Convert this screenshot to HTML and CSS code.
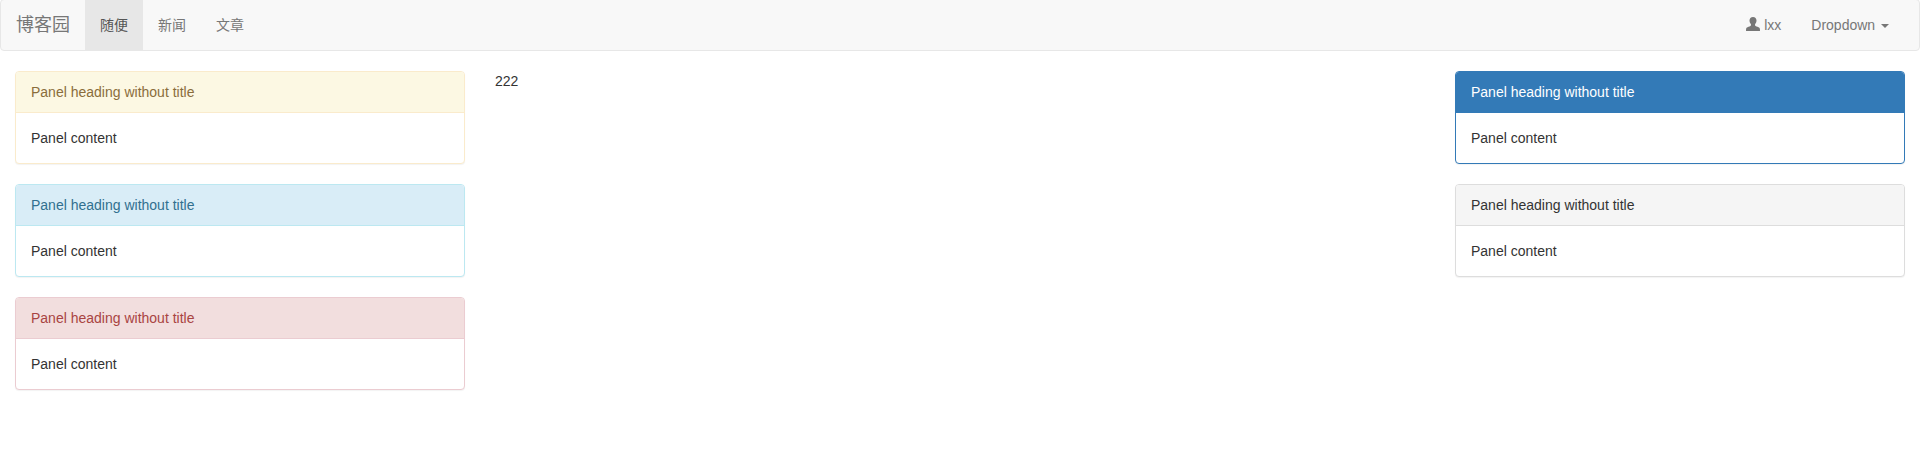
FILE: index.html
```html
<!DOCTYPE html>
<html lang="zh-CN">
<head>
    <meta charset="UTF-8">
    <meta name="viewport" content="width=device-width, initial-scale=1.0">
    <title>博客园</title>
    <link rel="stylesheet" href="styles.css">
</head>
<body>
    <nav class="navbar">
        <a href="#" class="navbar-brand">博客园</a>
        <ul class="nav">
            <li class="active"><a href="#">随便</a></li>
            <li><a href="#">新闻</a></li>
            <li><a href="#">文章</a></li>
        </ul>
        <ul class="nav nav-right">
            <li>
                <a href="#">
                    <svg class="icon-user" viewBox="0 0 14 14" aria-hidden="true"><path d="M7 0C4.800 0 3.500 1.500 3.500 3.600c0 1.500.6 2.800 1.300 3.500.3.400.3 1 .1 1.400-.3.500-1.100.8-2.400 1.200C1.100 10.200.3 10.800.1 11.800L0 14h14l-.1-2.200c-.2-1-1-1.600-2.400-2.100-1.300-.4-2.100-.7-2.400-1.200-.2-.4-.2-1 .1-1.400.7-.7 1.300-2 1.300-3.500C10.500 1.500 9.200 0 7 0z"/></svg>
                    lxx
                </a>
            </li>
            <li><a href="#">Dropdown <span class="caret"></span></a></li>
        </ul>
    </nav>

    <div class="row">
        <div class="col-side">
            <div class="panel panel-warning">
                <div class="panel-heading">Panel heading without title</div>
                <div class="panel-body">Panel content</div>
            </div>
            <div class="panel panel-info">
                <div class="panel-heading">Panel heading without title</div>
                <div class="panel-body">Panel content</div>
            </div>
            <div class="panel panel-danger">
                <div class="panel-heading">Panel heading without title</div>
                <div class="panel-body">Panel content</div>
            </div>
        </div>
        <div class="col-main">
            <p>222</p>
        </div>
        <div class="col-side">
            <div class="panel panel-primary">
                <div class="panel-heading">Panel heading without title</div>
                <div class="panel-body">Panel content</div>
            </div>
            <div class="panel panel-default">
                <div class="panel-heading">Panel heading without title</div>
                <div class="panel-body">Panel content</div>
            </div>
        </div>
    </div>
</body>
</html>
```

FILE: styles.css
```css
* {
    box-sizing: border-box;
}
body {
    font-family: "Liberation Sans", "Noto Sans CJK SC", Arial, sans-serif;
    font-size: 14px;
    line-height: 20px;
    color: #333;
    background-color: #fff;
    margin: 0;
    padding: 0;
}
a {
    text-decoration: none;
}
.navbar {
    display: flex;
    min-height: 52px;
    margin-top: -1px;
    margin-bottom: 20px;
    padding: 0 15px;
    background-color: #f8f8f8;
    border: 1px solid #e7e7e7;
    border-radius: 4px;
}
.navbar-brand {
    height: 50px;
    padding: 15px;
    margin-left: -15px;
    font-size: 18px;
    color: #777;
}
.nav {
    display: flex;
    list-style: none;
    margin: 0;
    padding: 0;
}
.nav-right {
    margin-left: auto;
}
.nav a {
    display: block;
    height: 50px;
    padding: 15px;
    color: #777;
}
.nav .active a {
    color: #555;
    background-color: #e7e7e7;
}
.icon-user {
    width: 14px;
    height: 14px;
    fill: #777;
    vertical-align: -1px;
}
.caret {
    display: inline-block;
    width: 0;
    height: 0;
    margin-left: 2px;
    vertical-align: middle;
    border-top: 4px solid;
    border-right: 4px solid transparent;
    border-left: 4px solid transparent;
}
.row {
    display: flex;
}
.col-side {
    width: 25%;
    padding: 0 15px;
}
.col-main {
    width: 50%;
    padding: 0 15px;
}
.col-main p {
    margin: 0 0 10px;
}
.panel {
    margin-bottom: 20px;
    background-color: #fff;
    border: 1px solid transparent;
    border-radius: 4px;
    box-shadow: 0 1px 1px rgba(0, 0, 0, 0.05);
}
.panel-heading {
    padding: 10px 15px;
    border-bottom: 1px solid transparent;
    border-top-left-radius: 3px;
    border-top-right-radius: 3px;
}
.panel-body {
    padding: 15px;
}
.panel-warning {
    border-color: #faebcc;
}
.panel-warning .panel-heading {
    color: #8a6d3b;
    background-color: #fcf8e3;
    border-color: #faebcc;
}
.panel-info {
    border-color: #bce8f1;
}
.panel-info .panel-heading {
    color: #31708f;
    background-color: #d9edf7;
    border-color: #bce8f1;
}
.panel-danger {
    border-color: #ebccd1;
}
.panel-danger .panel-heading {
    color: #a94442;
    background-color: #f2dede;
    border-color: #ebccd1;
}
.panel-primary {
    border-color: #337ab7;
}
.panel-primary .panel-heading {
    color: #fff;
    background-color: #337ab7;
    border-color: #337ab7;
}
.panel-default {
    border-color: #ddd;
}
.panel-default .panel-heading {
    color: #333;
    background-color: #f5f5f5;
    border-color: #ddd;
}
```
